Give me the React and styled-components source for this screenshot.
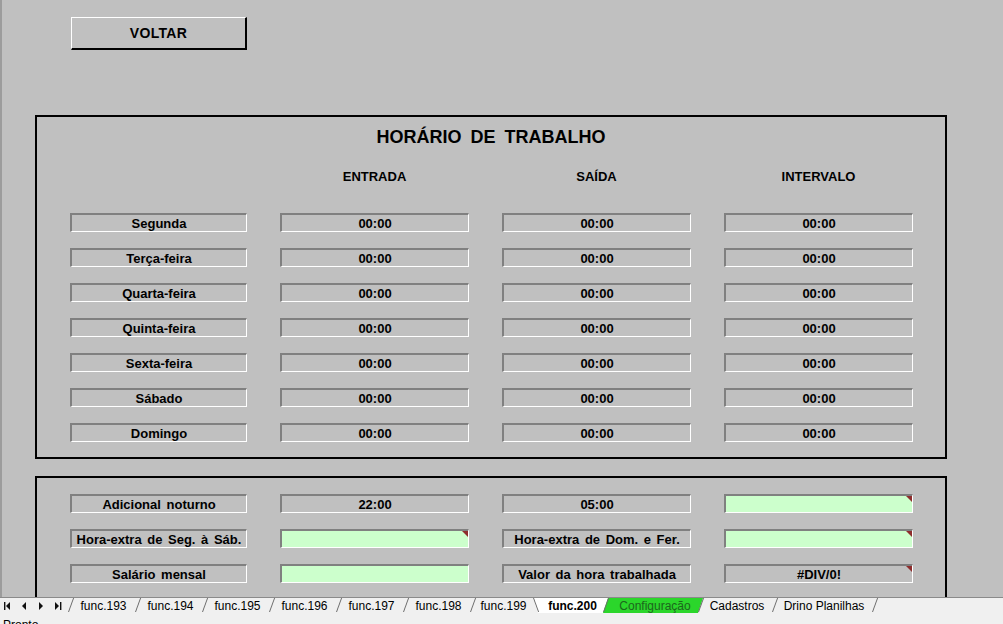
import React from 'react';
import styled, { createGlobalStyle, css } from 'styled-components';

const GlobalStyle = createGlobalStyle`
  html, body { margin: 0; padding: 0; background: #f0f0f0; }
  body { font-family: "Liberation Sans", Arial, sans-serif; }
  * { box-sizing: border-box; }
`;

const Window = styled.div`
  width: 1003px;
  height: 624px;
  overflow: hidden;
  display: flex;
  flex-direction: column;
`;

const Sheet = styled.div`
  flex: none;
  height: 597px;
  overflow: hidden;
  background: #c0c0c0;
  border-left: 2px solid #9c9c9c;
  padding-top: 17px;
`;

const TopBar = styled.div`
  display: flex;
  padding-left: 69px;
`;

const BackButton = styled.button`
  width: 176px;
  height: 33px;
  padding: 0;
  background: #c0c0c0;
  border-style: solid;
  border-color: #ffffff #000000 #000000 #ffffff;
  border-width: 1px 2px 2px 1px;
  font-family: "Liberation Sans", Arial, sans-serif;
  font-weight: bold;
  font-size: 14px;
  letter-spacing: 0.3px;
  color: #000;
  cursor: pointer;
`;

const Panel = styled.section`
  width: 912px;
  margin-left: 33px;
  margin-top: ${p => p.$mt}px;
  border: 2px solid #000;
  padding: ${p => p.$pt}px 0 ${p => p.$pb}px 33px;
`;

const Title = styled.h1`
  margin: 0 0 0 -33px;
  text-align: center;
  font-size: 18px;
  line-height: 22px;
  font-weight: bold;
  word-spacing: 4px;
  color: #000;
`;

const Grid = styled.div`
  display: grid;
  grid-template-columns: 177px repeat(3, 189px);
  column-gap: 33px;
  row-gap: 16px;
  margin-top: ${p => p.$mt || 0}px;
`;

const ColHead = styled.div`
  text-align: center;
  font-weight: bold;
  font-size: 13px;
  line-height: 16px;
  color: #000;
`;

const Cell = styled.div`
  position: relative;
  height: 19px;
  display: flex;
  align-items: center;
  justify-content: center;
  border-style: solid;
  border-color: #808080 #ffffff #ffffff #808080;
  border-width: 2px 1px 1px 2px;
  background: ${p => (p.$green ? '#ccffcc' : 'transparent')};
  font-weight: bold;
  font-size: 13px;
  line-height: 1;
  word-spacing: 2px;
  white-space: nowrap;
  color: #000;
  ${p =>
    p.$note &&
    css`
      &::after {
        content: '';
        position: absolute;
        top: 0;
        right: 0;
        width: 0;
        height: 0;
        border-left: 6px solid transparent;
        border-top: 6px solid #8e2d2d;
      }
    `}
`;

const TabBar = styled.div`
  flex: none;
  height: 17px;
  display: flex;
  background: #f0f0f0;
  border-top: 1px solid #8a8a8a;
`;

const NavGroup = styled.div`
  flex: none;
  width: 68px;
  display: flex;
  align-items: center;
`;

const Tab = styled.div`
  position: relative;
  isolation: isolate;
  flex: none;
  width: ${p => p.$w}px;
  margin-right: ${p => p.$mr || 0}px;
  padding-left: 4px;
  text-align: center;
  font-family: "Liberation Sans", Arial, sans-serif;
  font-size: 12px;
  line-height: 16px;
  white-space: nowrap;
  color: ${p => (p.$green ? '#1c661c' : '#000')};
  font-weight: ${p => (p.$active ? 'bold' : 'normal')};

  &::before {
    content: '';
    position: absolute;
    left: 0;
    top: 0;
    width: 1px;
    height: 14px;
    background: #6e6e6e;
    transform-origin: ${p => (p.$active ? 'top left' : 'bottom left')};
    transform: skewX(${p => (p.$active ? '20deg' : '-20deg')});
    z-index: 1;
  }

  &::after {
    content: '';
    position: absolute;
    inset: 0 0 1px 0;
    z-index: -1;
    background: ${p => (p.$active ? '#ffffff' : p.$green ? '#2bd62b' : 'transparent')};
    clip-path: ${p =>
      p.$active
        ? 'polygon(0 0, 100% 0, calc(100% - 5px) 100%, 5px 100%)'
        : 'polygon(5px 0, 100% 0, calc(100% - 5px) 100%, 0 100%)'};
  }
`;

const TabEnd = styled(Tab)`
  width: 10px;
`;

const StatusBar = styled.div`
  flex: 1;
  background: #f0f0f0;
  padding: 4px 0 0 3px;
  font-family: "Liberation Sans", Arial, sans-serif;
  font-size: 12px;
  line-height: 14px;
  color: #000;
`;

function NavArrows() {
  return (
    <svg width="64" height="16" viewBox="0 0 64 16">
      <g fill="#111">
        <rect x="4" y="4" width="1.4" height="8" />
        <polygon points="6,8 10,4 10,12" />
        <polygon points="22,8 26,4 26,12" />
        <polygon points="43,8 39,4 39,12" />
        <polygon points="59,8 55,4 55,12" />
        <rect x="60" y="4" width="1.4" height="8" />
      </g>
    </svg>
  );
}

const days = ['Segunda', 'Terça-feira', 'Quarta-feira', 'Quinta-feira', 'Sexta-feira', 'Sábado', 'Domingo'];

const tabs = [
  { name: 'func.193', w: 67 },
  { name: 'func.194', w: 67 },
  { name: 'func.195', w: 67 },
  { name: 'func.196', w: 67 },
  { name: 'func.197', w: 67 },
  { name: 'func.198', w: 67 },
  { name: 'func.199', w: 63 },
  { name: 'func.200', w: 75, mr: -5, active: true },
  { name: 'Configuração', w: 100, mr: -5, green: true },
  { name: 'Cadastros', w: 74 },
  { name: 'Drino Planilhas', w: 100 },
];

export default function App() {
  return (
    <>
      <GlobalStyle />
      <Window>
        <Sheet>
          <TopBar>
            <BackButton>VOLTAR</BackButton>
          </TopBar>

          <Panel $mt={65} $pt={9} $pb={15}>
            <Title>HORÁRIO DE TRABALHO</Title>
            <Grid $mt={21}>
              <div />
              <ColHead>ENTRADA</ColHead>
              <ColHead>SAÍDA</ColHead>
              <ColHead>INTERVALO</ColHead>
            </Grid>
            <Grid $mt={28}>
              {days.map(d => (
                <React.Fragment key={d}>
                  <Cell>{d}</Cell>
                  <Cell>00:00</Cell>
                  <Cell>00:00</Cell>
                  <Cell>00:00</Cell>
                </React.Fragment>
              ))}
            </Grid>
          </Panel>

          <Panel $mt={17} $pt={16} $pb={30}>
            <Grid>
              <Cell>Adicional noturno</Cell>
              <Cell>22:00</Cell>
              <Cell>05:00</Cell>
              <Cell $green $note />
              <Cell>Hora-extra de Seg. à Sáb.</Cell>
              <Cell $green $note />
              <Cell>Hora-extra de Dom. e Fer.</Cell>
              <Cell $green $note />
              <Cell>Salário mensal</Cell>
              <Cell $green />
              <Cell>Valor da hora trabalhada</Cell>
              <Cell $note>#DIV/0!</Cell>
            </Grid>
          </Panel>
        </Sheet>

        <TabBar>
          <NavGroup>
            <NavArrows />
          </NavGroup>
          {tabs.map(t => (
            <Tab key={t.name} $w={t.w} $mr={t.mr} $active={t.active} $green={t.green}>
              {t.name}
            </Tab>
          ))}
          <TabEnd $w={10} />
        </TabBar>
        <StatusBar>Pronto</StatusBar>
      </Window>
    </>
  );
}
